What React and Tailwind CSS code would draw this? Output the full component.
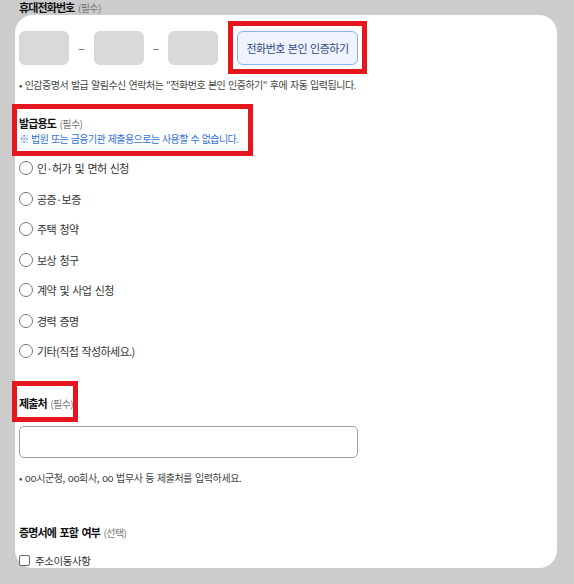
import React from "react";

const font = { fontFamily: '"Noto Sans CJK KR", "Noto Sans", sans-serif' };

const purposes = [
  "인·허가 및 면허 신청",
  "공증·보증",
  "주택 청약",
  "보상 청구",
  "계약 및 사업 신청",
  "경력 증명",
  "기타(직접 작성하세요.)",
];

// red annotation frame laid over a field
const RedFrame = ({ className }) => (
  <div className={`pointer-events-none absolute border-[5px] border-[#e5161e] ${className}`} />
);

const Label = ({ title, hint }) => (
  <div className="h-[16px] text-[11px] leading-[16px] font-bold text-[#111] tracking-[-0.9px] [word-spacing:2px]">
    {title} <span className="text-[10px] font-normal text-[#777] tracking-[-0.6px]">({hint})</span>
  </div>
);

const App = () => {
  return (
    <div className="w-[574px] h-[584px] overflow-hidden bg-[#cccccc]" style={font}>
      {/* ── PHONE LABEL (sits above the panel) ── */}
      <div className="pl-[19px] pt-[1px] h-[15px] text-[11px] leading-[13px] font-bold text-[#111] tracking-[-0.9px] [word-spacing:2px]">
        휴대전화번호 <span className="text-[10px] font-normal text-[#777] tracking-[-0.6px]">(필수)</span>
      </div>

      <div className="ml-[15px] w-[542px] h-[553px] rounded-[18px] bg-white pl-[4px] pt-[16px]">
        {/* ── PHONE ROW ── */}
        <div className="flex items-center h-[34px]">
          <div className="w-[50px] h-[34px] rounded-[6px] bg-[#d9d9d9]" />
          <div className="w-[25px] text-center text-[12px] text-[#555]">–</div>
          <div className="w-[50px] h-[34px] rounded-[6px] bg-[#d9d9d9]" />
          <div className="w-[24px] text-center text-[12px] text-[#555]">–</div>
          <div className="w-[50px] h-[34px] rounded-[6px] bg-[#d9d9d9]" />
          <div className="relative ml-[19px]">
            <button
              type="button"
              className="w-[121px] h-[34px] rounded-[6px] border border-[#8fb0ee] bg-[#eef3ff] text-[11px] text-[#33477f] tracking-[-0.5px] [word-spacing:1px]"
            >
              전화번호 본인 인증하기
            </button>
            <RedFrame className="-left-[9px] -top-[10px] w-[139px] h-[53px]" />
          </div>
        </div>

        <p className="mt-[13px] h-[14px] text-[10px] leading-[14px] text-[#444] tracking-[-0.5px] [word-spacing:1px]">
          • 인감증명서 발급 알림수신 연락처는 "전화번호 본인 인증하기" 후에 자동 입력됩니다.
        </p>

        {/* ── PURPOSE ── */}
        <div className="relative mt-[23px]">
          <Label title="발급용도" hint="필수" />
          <p className="mt-[1px] h-[14px] text-[10px] leading-[14px] text-[#2f6fd8] tracking-[-0.6px] [word-spacing:1px]">
            ※ 법원 또는 금융기관 제출용으로는 사용할 수 없습니다.
          </p>
          <RedFrame className="-left-[7px] -top-[11px] w-[241px] h-[52px]" />
        </div>

        <div className="mt-[7px] flex flex-col">
          {purposes.map((p) => (
            <label key={p} className="flex items-center h-[30.5px] gap-[4px]">
              <span className="w-[14px] h-[14px] rounded-full border border-[#777] bg-white" />
              <span className="text-[11px] text-[#333] tracking-[-0.6px] [word-spacing:1.5px]">{p}</span>
            </label>
          ))}
        </div>

        {/* ── SUBMIT TO ── */}
        <div className="relative mt-[28px] w-fit">
          <Label title="제출처" hint="필수" />
          <RedFrame className="-left-[7px] -top-[14px] w-[66px] h-[41px]" />
        </div>

        <input
          type="text"
          className="mt-[15px] block w-[339px] h-[32px] rounded-[5px] border border-[#a0a0a0] outline-none"
        />

        <p className="mt-[13px] h-[14px] text-[10px] leading-[14px] text-[#444] tracking-[-0.4px] [word-spacing:1px]">
          • oo시군청, oo회사, oo 법무사 등 제출처를 입력하세요.
        </p>

        {/* ── INCLUDE IN CERT ── */}
        <div className="mt-[39px]">
          <Label title="증명서에 포함 여부" hint="선택" />
        </div>

        <label className="mt-[14px] flex items-center h-[14px] gap-[5px]">
          <span className="w-[11px] h-[11px] rounded-[2px] border border-[#666] bg-white" />
          <span className="text-[10.5px] text-[#333] tracking-[-0.4px]">주소이동사항</span>
        </label>
      </div>
    </div>
  );
};

export default App;
